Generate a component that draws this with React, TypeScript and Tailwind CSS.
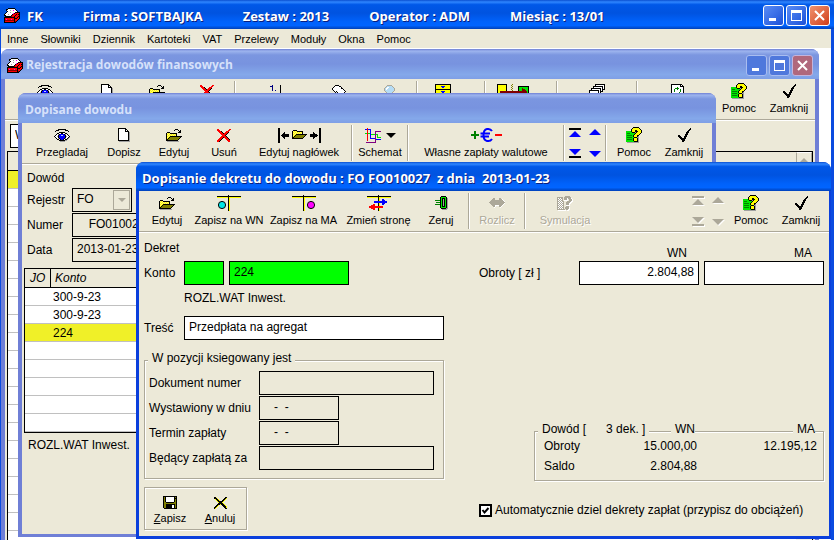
import React from "react";

const PALETTE: Record<string, string> = {
  K: "#000000",
  W: "#ffffff",
  B: "#0000ff",
  R: "#ff0000",
  Y: "#ffff00",
  y: "#fff27a",
  O: "#808000",
  G: "#00e600",
  g: "#a0a0a0",
  D: "#008000",
  M: "#ff00ff",
  C: "#00ffff",
  P: "#800080",
  N: "#800000",
  L: "#b5dcf5",
  S: "#aca899",
};

// Draws a small bitmap, one character per pixel
const Bitmap: React.FC<{ rows: string[] }> = ({ rows }) => {
  const width = Math.max(...rows.map((r) => r.length));
  return (
    <svg width={width} height={rows.length} viewBox={`0 0 ${width} ${rows.length}`} shapeRendering="crispEdges" aria-hidden="true">
      {rows.flatMap((row, y) =>
        row.split("").map((c, x) => (PALETTE[c] ? <rect key={`${x}-${y}`} x={x} y={y} width="1" height="1" fill={PALETTE[c]} /> : null))
      )}
    </svg>
  );
};

const EYE = [
  "....KKKKKKKK....",
  "..KKK......KKK..",
  ".K............K.",
  ".....KKKKKK.....",
  "...KKWWKKWWKK...",
  "..KWgKBBBBKgWK..",
  ".KWWKBBLLBBKWWK.",
  "KWWgKBBBBBBKgWWK",
  ".KWWKBBBBBBKWWKg",
  "..KWgKBBBBKgWKg.",
  "...KKWKBBKWKKg..",
  ".....KKKKKKgg...",
  "......ggggg.....",
];

const PAGE = [
  "KKKKKKKK....",
  "KWWWWWWKK...",
  "KWWWWWWKWK..",
  "KWWWWWWKKKK.",
  "KWWWWWWWWWKg",
  "KWWWWWWWWWKg",
  "KWWWWWWWWWKg",
  "KWWWWWWWWWKg",
  "KWWWWWWWWWKg",
  "KWWWWWWWWWKg",
  "KWWWWWWWWWKg",
  "KWWWWWWWWWKg",
  "KKKKKKKKKKKg",
  ".ggggggggggg",
];

const FOLDER = [
  ".........KKK....",
  "........K...K.K.",
  ".............KK.",
  ".KKK........KKK.",
  "KyYyKKKKKKK.....",
  "KYyYyYyYyYK.....",
  "KyYyYyYyYyK.....",
  "KYyYKKKKKKKKKKKK",
  "KyYKOOOOOOOOOOK.",
  "KYKOOOOOOOOOOK..",
  "KKOOOOOOOOOOK...",
  "KKKKKKKKKKKK....",
  ".gggggggggggg...",
];

const CROSS = [
  "RR..........RR",
  "RRR........RR.",
  ".RRRK....RRR..",
  "..RRRK..RRRK..",
  "...RRRKRRRK...",
  "....RRRRRK....",
  ".....RRRK.....",
  "....RRRRRK....",
  "...RRRKRRRK...",
  "..RRRK..RRRK..",
  ".RRRK....RRRK.",
  "RRRK......RRR.",
  "RRK........RR.",
];

const WIDE_FOLDER = [
  "KK.......................................KK",
  "KK.......................................KK",
  "KK.............KKKK......................KK",
  "KK............KyYyYKKKKKK................KK",
  "KK....K.......KYyYyYyYyYK..........K.....KK",
  "KK...KK.......KyYyYyYyYyK..........KK....KK",
  "KK..KKKKKKK...KYyYKKKKKKKKKKK...KKKKKKK..KK",
  "KK.KKKKKKKK...KyYKOOOOOOOOOK....KKKKKKKK.KK",
  "KK..KKKKKKK...KYKOOOOOOOOOK.....KKKKKKK..KK",
  "KK...KK.......KKOOOOOOOOOK.........KK....KK",
  "KK....K.......KKKKKKKKKKK..........K.....KK",
  "KK.......................................KK",
  "KK.......................................KK",
  "KK.......................................KK",
  "KK.......................................KK",
];

const SCHEME = [
  "..R.............",
  "BBRBBB..........",
  "..R..B..........",
  "..R..B....PPPPPP",
  "..R..B....P.....",
  "GGRGGB....P.....",
  "..R..BGGGGPGG...",
  "..R..B....P.G...",
  "..R..B....P.G...",
  "..R..B....P.GGGG",
  "..R..BBBBBP.....",
  "..R.......PBBBBB",
  "..R.......P.....",
  "..........P.....",
  ".PPPPPPPPPP.....",
];

const HELP = [
  ".......KKKKKK...",
  "......KYYYYYYK..",
  ".....KYYYYYYYYK.",
  ".....KYYYKKYYYYK",
  "GGGGGKYYYKKKYYYK",
  "GGGGGGKKKgKYYYYK",
  "GDDDGGGGGKYYYYK.",
  "GGGGGGGGKYYYYK..",
  "GDDDDDGKYYYKK...",
  "GGGGGGGKYYYKg...",
  "GDDDDDGGKKKgg...",
  "GGGGGGGKYYYKg...",
  "GDDDDDGKYYYKg...",
  "GGGGGGGKYYYKg...",
  "GGGGGGGGKKKKg...",
  ".gggggggggggg...",
];

const HELP_DISABLED = [
  "........SSSSS...",
  "SSSSSS.SSSSSSS..",
  "SWSWSS.SSSWSSSW.",
  "SSWSWS.SSSW.SSSW",
  "SWSWSS.WWWW.SSSW",
  "SSWSWSS...SSSSWW",
  "SWSWSWS..SSSSWW.",
  "SSWSWSS..SSSWW..",
  "SWSWSWS..SSSW...",
  "SSWSWSS..WWWW...",
  "SWSWSWS..SSS....",
  "SSWSWSS.SSSSW...",
  "SWSWSWS.SSSSW...",
  "SSSSSSSS.SSWW...",
  ".WWWWWWWW.WW....",
];

const CHECK = [
  "............K",
  "...........KK",
  "..........KK.",
  ".........KK..",
  "........KKK..",
  "........KK...",
  ".......KKK...",
  "KK.....KK....",
  "KKK...KKK....",
  ".KKK..KK.....",
  "..KKKKKK.....",
  "...KKKK......",
  "....KKK......",
  "....KK.......",
];

const ZERO = [
  "......KKKKK..",
  ".....KGGGGGK.",
  ".....KGKKKGKg",
  ".....KGKgKGKg",
  "DDDDDKGKgKGKg",
  ".....KGKgKGKg",
  ".DDDDKGKgKGKg",
  ".....KGKgKGKg",
  "DDDDDKGKgKGKg",
  ".....KGKgKGKg",
  ".....KGKKKGKg",
  ".....KGGGGGKg",
  "......KKKKKgg",
  ".......ggggg.",
];

const SWAP_DISABLED = [
  "....SS....SS....",
  "...SSS....SSSW..",
  "..SSSSSSSSSSSSW.",
  ".SSSSSSSSSSSSSSW",
  "SSSSSSSSSSSSSSSS",
  ".SSSSSSSSSSSSSSW",
  "..SSSSSSSSSSSSW.",
  "...SSSWWWWSSSW..",
  "....SSW...SSW...",
  ".....W.....W....",
];

const DISK = [
  "KKKKKKKKKKKKKK",
  "KOKWWWWWWWWKOK",
  "KOKWWWWWWWWKKK",
  "KOKWWWWWWWWKOK",
  "KOKWWWWWWWWKOK",
  "KOKWWWWWWWWKOK",
  "KOOKKKKKKKKOOK",
  "KOOOOOOOOOOOOK",
  "KOOKKKKKKKKKOK",
  "KOOKKKKKKWWKOK",
  "KOOKKKKKKWWKOK",
  "KOOKKKKKKWWKOK",
  ".KKKKKKKKKKKKK",
];

const CANCEL = [
  "KKy........KK",
  "KKKy......KKY",
  ".YKKY....KKY.",
  "..YKKY..KKY..",
  "...YKKKKKY...",
  "....YKKKY....",
  "....KKKKKY...",
  "...KKKYKKKY..",
  "..KKY...KKKY.",
  ".KKY.....KKKY",
  "KKY.......KKY",
  "KY.........KK",
];

const LEDGER = [
  "....KKKKKKK.....",
  "..KKWWWWWWWK....",
  "..KWWWgWWMWWK...",
  "...KWWWWWWWWWK..",
  "..KWWWgWWWWKKKKK",
  ".KWWWWWWWMKRRRRK",
  "KWWWgWWWKRRRKRKK",
  "KKWWWWWKRRRKRRRK",
  ".KKKKKKNRRKRRRKK",
  "KKKKKKKKKKKRRKRK",
  "KRRRRRRRRRKKKRRK",
  "KRMRRRRMRRKRRRK.",
  "KNNNNNNNNNKRRK..",
  "KRRRRRRRRRKNK...",
  "KKKKKKKKKKKK....",
];

const HAND = [
  "...KKKK.......",
  "..KWWWWKK.....",
  ".KWWWWWWWK....",
  "KWWWWWWWWKK...",
  "KWWWWWWWWWWK..",
  ".KWWWWWWWWWWK.",
  "..KWKWWWWWWWWK",
  "...K.KWWWWWWK.",
  "......KWWWWK..",
  ".......KWWK...",
  "........KK....",
  "........KK....",
  "........KK....",
];

const LENS = [
  "...SSSSS...",
  "..SLLLLLS..",
  ".SLWWLLLLS.",
  "SLWWLLLLLLS",
  "SLWLLLLLLLS",
  "SLLLLLLLLLS",
  ".SLLLLLLLS.",
  "..SLLLLLS..",
  "...SSSSSKK.",
  "........KKK",
  ".........KK",
  "..........K",
  "..........K",
];

const CABINET = [
  "KKKKKKKKKKKKKKKK",
  "KYYYYYYYYYYYYYYK",
  "KYYYYYBBBBYYYYYK",
  "KYYYYYYBBYYYYYYK",
  "KYYYYYYYYYYYYYYK",
  "KKKKKKKKKKKKKKKK",
  "KYYYYYYYYYYYYYYK",
  "KYYYYYBBBBYYYYYK",
  "KYYYYYYBBYYYYYYK",
  "KYYYYYYYYYYYYYYK",
  "KKKKKKKKKKKKKKKK",
  "KYYYYYYYYYYYYYYK",
  "KYYYYYBBBBYYYYYK",
  "KYYYYYYYYYYYYYYK",
  "KKKKKKKKKKKKKKKK",
];

const TRANSFER = [
  "KKKKKKKKKK.....O................",
  "KYYYYYYYYK....O.................",
  "KYYYYYYYYK.....O.....KKKKKKKKKKK",
  "KYYYYYYYYK....O......KGGGGGGGGGK",
  "KYYYYYYYYK.....O.....KGGGNGGGGGK",
  "KYYYYYYYYK....O......KGGGNNNGGGK",
  "KYYYYYYYYK.....O.....KGGGNNNNGGK",
  "KYYNNNNNNNNNNNNNNNNNNNNNNNNNNNGK",
  "KYYNNNNNNNNNNNNNNNNNNNNNNNNNNNGK",
  "KYYYYYYYYK.....O.....KGGGNNNNGGK",
  "KYYYYYYYYK....O......KGGGNNGGGGK",
  "KYYYYYYYYK.....O.....KGGGGGGGGGK",
  "KYYYYYYYYK....O......KGGGGGGGGGK",
  "KKKKKKKKKK.....O.....KKKKKKKKKKK",
];

const PAGES = [
  "......KKKKKKKKKK",
  "......KWWWWWWWWK",
  "....KKKKKKKKKKWK",
  "....KWWWWWWWWKWK",
  "..KKKKKKKKKKWKWK",
  "..KWWWWWWWWKWKKK",
  "KKKKKKKKKKWKWK..",
  "KWWWWWWWWKWKKK..",
  "KWWWWWWWWKWK....",
  "KWWWWWWWWKKK....",
  "KWWWWWWWWK......",
  "KWWWWWWWWK......",
  "KWWWWWWWWK......",
  "KKKKKKKKKK......",
];

const REFRESH = [
  "KKKKKKKKKKK..",
  "KWWWWWWWWKWK.",
  "KWWWWWWWWKKKK",
  "KWWWWWDWWWWWK",
  "KWWWDDDDWWWWK",
  "KWWDWWDWWDWWK",
  "KWWDWWWWWDWWK",
  "KWWDWWWWWDWWK",
  "KWWWWWWWDWWWK",
  "KWWWWDWDWWWWK",
  "KWWWWWWWWWWWK",
  "KWWWWWWWWWWWK",
  "KWWWWWWWWWWWK",
  "KKKKKKKKKKKKK",
];

const PostIcon: React.FC<{ side: "left" | "right" }> = ({ side }) => (
  <svg width="24" height="16" viewBox="0 0 24 16" shapeRendering="crispEdges" aria-hidden="true">
    <path d="M0 2h24v1H0zM12 1h1v15h-1z" fill="#ffff00" />
    <path d="M0 1h24v1H0zM11 0h1v16h-1z" fill="#000" />
    <circle cx={side === "left" ? 5 : 19} cy="10" r="3.6" fill={side === "left" ? "#00e6e6" : "#ff00ff"} stroke="#000" shapeRendering="auto" />
  </svg>
);

const SideIcon: React.FC = () => (
  <svg width="24" height="16" viewBox="0 0 24 16" shapeRendering="crispEdges" aria-hidden="true">
    <path d="M0 2h24v1H0zM12 1h1v15h-1z" fill="#ffff00" />
    <path d="M0 1h24v1H0zM11 0h1v16h-1z" fill="#000" />
    <path d="M7 6h8V4h2v1h1v1h2v2h-2v1h-1v1h-2V8H7z" fill="#0000ff" />
    <path d="M16 13H8v2H6v-1H4v-1H2v-2h2v-1h2V9h2v2h8z" fill="#ff0000" />
  </svg>
);

const EuroIcon: React.FC = () => (
  <svg width="32" height="16" viewBox="0 0 32 16" aria-hidden="true">
    <path d="M1 8h8M5 4v8" stroke="#008000" strokeWidth="2" />
    <path d="M22 4C20 1 13.500 .5 13.500 8S20 15 22 12M10.500 6.500H20M10.500 9.500H19" stroke="#0000ff" strokeWidth="2" fill="none" />
    <path d="M25 8h7" stroke="#ff0000" strokeWidth="2" />
  </svg>
);

const ListIcon: React.FC = () => (
  <svg width="14" height="16" viewBox="0 0 14 16" shapeRendering="crispEdges" aria-hidden="true">
    <path d="M3 2h1v6H3V4H1V3h2zM6 7h1v1H6z" fill="#000080" />
    <path d="M11 2h1v14h-1z" fill="#000" />
  </svg>
);

interface ToolProps {
  label: string;
  children: React.ReactNode;
  className?: string;
  disabled?: boolean;
  iconOnly?: boolean;
}

const Tool: React.FC<ToolProps> = ({ label, children, className = "w-[50px]", disabled, iconOnly }) => (
  <button
    type="button"
    disabled={disabled}
    aria-label={label}
    className={`flex shrink-0 flex-col items-center whitespace-nowrap pt-1 text-[11px] leading-[14px] ${className} ${
      disabled ? "text-[#aca899] [text-shadow:1px_1px_0_#fff]" : "text-black"
    }`}
  >
    <span className="flex h-[18px] items-center pb-0.5">{children}</span>
    {!iconOnly && <span>{label}</span>}
  </button>
);

const Separator: React.FC = () => <div className="mx-0.5 my-0.5 w-0.5 shrink-0 border-l border-r border-l-[#aca899] border-r-white" />;

const NavArrows: React.FC<{ disabled?: boolean }> = ({ disabled }) => {
  const fill = disabled ? "#aca899" : "#0000ff";
  const bar = disabled ? "#aca899" : "#000000";
  const shadow = disabled ? "[filter:drop-shadow(1px_1px_0_#fff)]" : "";
  const arrows = [
    { name: "Pierwszy", tri: "M6 3l6 6H0z", bar: "M0 0h12v2H0z" },
    { name: "Poprzedni", tri: "M6 1l6 6H0z" },
    { name: "Ostatni", tri: "M0 2h12l-6 6z", bar: "M0 9h12v2H0z" },
    { name: "Następny", tri: "M0 4h12l-6 6z" },
  ];
  return (
    <div className="grid w-9 shrink-0 grid-cols-2 content-between justify-items-center gap-x-1 pb-1 pt-[5px]">
      {arrows.map((a) => (
        <button key={a.name} type="button" disabled={disabled} aria-label={a.name}>
          <svg width="12" height="12" viewBox="0 0 12 12" className={shadow} aria-hidden="true">
            <path d={a.tri} fill={fill} />
            {a.bar && <path d={a.bar} fill={bar} />}
          </svg>
        </button>
      ))}
    </div>
  );
};

const Toolbar: React.FC<{ children: React.ReactNode }> = ({ children }) => (
  <div className="flex h-[41px] shrink-0 border-b border-[#aca899] px-[3px] shadow-[0_1px_0_#fff]">{children}</div>
);

const WindowButtons: React.FC<{ inactive?: boolean }> = ({ inactive }) => {
  const base = "flex size-[21px] items-center justify-center rounded-[3px] border";
  const blue = inactive ? "border-[#a9bdf0] bg-[#4f78dc]" : "border-white bg-linear-to-br from-[#5a8cf5] to-[#1c50d8]";
  const red = inactive ? "border-[#c3b4dc] bg-[#b0687c]" : "border-white bg-linear-to-br from-[#f0926e] to-[#cf3a12]";
  return (
    <div className="ml-auto flex gap-0.5">
      <button type="button" aria-label="Minimalizuj" className={`${base} ${blue}`}>
        <svg width="13" height="13" aria-hidden="true"><path d="M2 9h7v3H2z" fill="#fff" /></svg>
      </button>
      <button type="button" aria-label="Maksymalizuj" className={`${base} ${blue}`}>
        <svg width="13" height="13" aria-hidden="true"><path d="M1 1h11v11H1zM2 4v7h9V4z" fill="#fff" fillRule="evenodd" /></svg>
      </button>
      <button type="button" aria-label="Zamknij okno" className={`${base} ${red}`}>
        <svg width="13" height="13" aria-hidden="true"><path d="M2 2l9 9M11 2l-9 9" stroke="#fff" strokeWidth="2" /></svg>
      </button>
    </div>
  );
};

const ACTIVE_BAR = "bg-[linear-gradient(180deg,#0a4fd0_0%,#2f86ff_7%,#0058e8_16%,#0053e0_45%,#0062fb_75%,#0064ff_88%,#0040b8_100%)] text-white [text-shadow:1px_1px_0_#0a1f80]";
const INACTIVE_BAR = "bg-[linear-gradient(180deg,#6f80d4_0%,#9db4ee_7%,#7b96e0_20%,#7893df_50%,#84a8ea_85%,#7f9fe6_100%)] text-[#d6e1fa]";
const TITLE_FONT = "font-['Trebuchet_MS','Open_Sans',sans-serif] leading-[16px] font-bold whitespace-pre";
const FIELD = "h-6 border border-black px-1 pb-[3px] text-[12px] leading-[16px] text-black outline-none";

const MENU = ["Inne", "Słowniki", "Dziennik", "Kartoteki", "VAT", "Przelewy", "Moduły", "Okna", "Pomoc"];
const STATUS = ["FK", "Firma : SOFTBAJKA", "Zestaw : 2013", "Operator : ADM", "Miesiąc : 13/01"];

const RegisterWindow: React.FC = () => (
  <section className="absolute -bottom-2 left-0 right-3 top-px flex flex-col overflow-hidden rounded-t-lg bg-[#6f7fd6]">
    <header className={`flex h-[30px] shrink-0 items-center gap-[3px] px-[6px] pt-0.5 ${INACTIVE_BAR}`}>
      <Bitmap rows={LEDGER} />
      <h2 className={`text-[12px] ${TITLE_FONT}`}>Rejestracja dowodów finansowych</h2>
      <WindowButtons inactive />
    </header>
    <div className="mx-1 flex flex-1 flex-col overflow-hidden bg-[#ece9d8]">
      <Toolbar>
        <Tool label="Przegladaj" className="w-[74px]" iconOnly><Bitmap rows={EYE} /></Tool>
        <Tool label="Dopisz" iconOnly><Bitmap rows={PAGE} /></Tool>
        <Tool label="Edytuj" iconOnly><Bitmap rows={FOLDER} /></Tool>
        <Tool label="Usuń" iconOnly><Bitmap rows={CROSS} /></Tool>
        <Separator />
        <Tool label="Numeracja" className="w-[76px]" iconOnly><ListIcon /></Tool>
        <Tool label="Wskaż" iconOnly><Bitmap rows={HAND} /></Tool>
        <Tool label="Szukaj" iconOnly><Bitmap rows={LENS} /></Tool>
        <Separator />
        <Tool label="Kartoteka" className="w-[62px] pr-4" iconOnly><Bitmap rows={CABINET} /></Tool>
        <Separator />
        <Tool label="Przenieś" className="w-[66px] pr-4" iconOnly><Bitmap rows={TRANSFER} /></Tool>
        <Separator />
        <Tool label="Kopie" className="w-[74px]" iconOnly><Bitmap rows={PAGES} /></Tool>
        <Separator />
        <div className="ml-auto flex">
          <Tool label="Odśwież" className="w-[74px]" iconOnly><Bitmap rows={REFRESH} /></Tool>
          <Tool label="Pomoc"><Bitmap rows={HELP} /></Tool>
          <Tool label="Zamknij"><Bitmap rows={CHECK} /></Tool>
        </div>
      </Toolbar>
      <div className="flex flex-col gap-[3px] px-0.5 pt-1">
        <input aria-label="Wybór" defaultValue="W" className={`ml-[3px] w-40 bg-white ${FIELD}`} />
        <div className="flex border border-black bg-white">
          <table className="w-full border-separate border-spacing-0">
            <thead>
              <tr><th className="h-[19px] border-b border-black bg-[#ece9d8] p-0" /></tr>
            </thead>
            <tbody>
              {Array.from({ length: 22 }, (_, i) => (
                <tr key={i}>
                  <td className={`h-[18px] border-b border-[#c0c0c0] p-0 ${i === 0 ? "bg-[#f0f028]" : "bg-white"}`} />
                </tr>
              ))}
            </tbody>
          </table>
          <div className="w-4 shrink-0 bg-[#f4f2e8]">
            <button type="button" aria-label="W górę" className="flex h-4 w-4 items-center justify-center border border-l-[#aca899] border-t-white border-r-[#aca899] border-b-[#aca899] bg-[#ece9d8]">
              <svg width="8" height="4" aria-hidden="true"><path d="M4 0l4 4H0z" fill="#aca899" /></svg>
            </button>
          </div>
        </div>
      </div>
    </div>
  </section>
);

const entries = ["300-9-23", "300-9-23", "224", "", "", "", "", ""];

const DocumentWindow: React.FC = () => (
  <section className="absolute bottom-[3px] left-[17px] right-[115px] top-[45px] flex flex-col overflow-hidden rounded-t-lg bg-[#6f7fd6] pb-[3px]">
    <header className={`flex h-[30px] shrink-0 items-center px-[7px] pt-[3px] ${INACTIVE_BAR}`}>
      <h2 className={`text-[12px] ${TITLE_FONT}`}>Dopisane dowodu</h2>
    </header>
    <div className="mx-1 flex-1 overflow-hidden bg-[#ece9d8]">
      <Toolbar>
        <Tool label="Przegladaj" className="w-[74px]"><Bitmap rows={EYE} /></Tool>
        <Tool label="Dopisz"><Bitmap rows={PAGE} /></Tool>
        <Tool label="Edytuj"><Bitmap rows={FOLDER} /></Tool>
        <Tool label="Usuń"><Bitmap rows={CROSS} /></Tool>
        <Tool label="Edytuj nagłówek" className="w-[100px]"><Bitmap rows={WIDE_FOLDER} /></Tool>
        <Separator />
        <Tool label="Schemat">
          <span className="flex items-center gap-[5px]">
            <Bitmap rows={SCHEME} />
            <svg width="10" height="5" aria-hidden="true"><path d="M0 0h10L5 5z" fill="#000" /></svg>
          </span>
        </Tool>
        <Separator />
        <Tool label="Własne zapłaty walutowe" className="w-[150px]"><EuroIcon /></Tool>
        <Separator />
        <NavArrows />
        <Separator />
        <Tool label="Pomoc"><Bitmap rows={HELP} /></Tool>
        <Tool label="Zamknij"><Bitmap rows={CHECK} /></Tool>
      </Toolbar>
      <div className="flex flex-col px-0.5 pt-[6px] text-[12px] leading-[16px]">
        <h3 className="pl-[3px]">Dowód</h3>
        <div className="mt-0.5 flex flex-col gap-px pl-[3px]">
          <div className="flex items-center">
            <label htmlFor="rejestr" className="w-[45px]">Rejestr</label>
            <div className="relative">
              <select id="rejestr" className={`w-[60px] appearance-none bg-[#ece9d8] ${FIELD}`}>
                <option>FO</option>
              </select>
              <span className="pointer-events-none absolute right-0.5 top-0.5 flex h-5 w-[17px] items-center justify-center border border-[#aca899] bg-[#ece9d8]">
                <svg width="8" height="4" aria-hidden="true"><path d="M0 0h8L4 4z" fill="#aca899" /></svg>
              </span>
            </div>
          </div>
          <div className="flex items-center">
            <label htmlFor="numer" className="w-[45px]">Numer</label>
            <input id="numer" defaultValue="FO010027" className={`w-[90px] bg-[#ece9d8] text-center ${FIELD}`} />
          </div>
          <div className="flex items-center">
            <label htmlFor="data" className="w-[45px]">Data</label>
            <input id="data" defaultValue="2013-01-23" className={`w-[80px] bg-[#ece9d8] ${FIELD}`} />
          </div>
        </div>
        <table className="mt-[6px] w-full border-separate border-spacing-0 border border-black">
          <thead>
            <tr className="text-left italic">
              <th className="h-[19px] w-[26px] border-b border-r border-black p-0 pl-[5px] font-normal">JO</th>
              <th className="h-[19px] border-b border-black p-0 pl-1 font-normal">Konto</th>
            </tr>
          </thead>
          <tbody>
            {entries.map((konto, i) => (
              <tr key={i} className={konto === "224" ? "bg-[#f0f028]" : "bg-white"}>
                <td className="h-[18px] border-b border-[#c0c0c0] p-0" />
                <td className="h-[18px] border-b border-[#c0c0c0] p-0 pl-0.5">{konto}</td>
              </tr>
            ))}
          </tbody>
        </table>
        <p className="pl-1 pt-1">ROZL.WAT Inwest.</p>
      </div>
    </div>
  </section>
);

const payment = [
  { id: "dokument", label: "Dokument numer", value: "", width: "w-[175px]" },
  { id: "wystawiony", label: "Wystawiony w dniu", value: "   -  -", width: "w-20" },
  { id: "termin", label: "Termin zapłaty", value: "   -  -", width: "w-20" },
  { id: "zaplata", label: "Będący zapłatą za", value: "", width: "w-[175px]" },
];

const EntryWindow: React.FC = () => (
  <section className="absolute left-[135px] right-0 top-[114px] overflow-hidden rounded-t-lg bg-[#0a3fdc] pb-[3px]">
    <header className={`flex h-[29px] items-center px-[6px] pt-0.5 ${ACTIVE_BAR}`}>
      <h2 className={`text-[13px] ${TITLE_FONT}`}>{"Dopisanie dekretu do dowodu : FO FO010027  z dnia  2013-01-23"}</h2>
    </header>
    <div className="ml-[3px] mr-0.5 bg-[#ece9d8]">
      <Toolbar>
        <Tool label="Edytuj"><Bitmap rows={FOLDER} /></Tool>
        <Tool label="Zapisz na WN" className="w-[74px]"><PostIcon side="left" /></Tool>
        <Tool label="Zapisz na MA" className="w-[75px]"><PostIcon side="right" /></Tool>
        <Tool label="Zmień stronę" className="w-[75px]"><SideIcon /></Tool>
        <Tool label="Zeruj"><Bitmap rows={ZERO} /></Tool>
        <Separator />
        <Tool label="Rozlicz" disabled><Bitmap rows={SWAP_DISABLED} /></Tool>
        <Separator />
        <Tool label="Symulacja" className="w-[74px]" disabled><Bitmap rows={HELP_DISABLED} /></Tool>
        <div className="ml-auto flex">
          <NavArrows disabled />
          <Tool label="Pomoc"><Bitmap rows={HELP} /></Tool>
          <Tool label="Zamknij"><Bitmap rows={CHECK} /></Tool>
        </div>
      </Toolbar>
      <form className="flex justify-between px-[5px] pb-[6px] pt-2 text-[12px] leading-[16px]">
        <div className="w-[300px]">
          <h3>Dekret</h3>
          <div className="mt-[5px] flex items-center">
            <label htmlFor="konto" className="w-10">Konto</label>
            <input aria-label="JO" className={`w-10 bg-[#00ff00] ${FIELD}`} />
            <input id="konto" defaultValue="224" className={`ml-[5px] w-[120px] bg-[#00ff00] ${FIELD}`} />
          </div>
          <p className="mt-[5px] pl-10">ROZL.WAT Inwest.</p>
          <div className="mt-[10px] flex items-center">
            <label htmlFor="tresc" className="w-10">Treść</label>
            <input id="tresc" defaultValue="Przedpłata na agregat" className={`flex-1 bg-white ${FIELD}`} />
          </div>
          <fieldset className="mt-[10px] flex flex-col gap-px border border-[#aca899] px-1 pb-2 shadow-[1px_1px_0_#fff,inset_1px_1px_0_#fff]">
            <legend className="ml-[-1px] bg-[#ece9d8] px-1 pb-[5px]">W pozycji ksiegowany jest</legend>
            {payment.map((f) => (
              <div key={f.id} className="flex items-center">
                <label htmlFor={f.id} className="w-[110px]">{f.label}</label>
                <input id={f.id} defaultValue={f.value} className={`bg-[#ece9d8] ${f.width} ${FIELD}`} />
              </div>
            ))}
          </fieldset>
          <div className="mt-2 flex h-[43px] w-[103px] border border-[#aca899] shadow-[1px_1px_0_#fff,inset_1px_1px_0_#fff]">
            <button type="button" className="flex w-[50px] flex-col items-center pt-[6px] text-[11px] leading-[14px]">
              <span className="flex h-[17px] items-center"><Bitmap rows={DISK} /></span>
              <span><u>Z</u>apisz</span>
            </button>
            <button type="button" className="flex w-[50px] flex-col items-center pt-[6px] text-[11px] leading-[14px]">
              <span className="flex h-[17px] items-center"><Bitmap rows={CANCEL} /></span>
              <span><u>A</u>nuluj</span>
            </button>
          </div>
        </div>

        <div className="flex w-[345px] flex-col pb-3 pt-[5px]">
          <div className="flex justify-end gap-[5px] text-right">
            <label htmlFor="wn" className="w-[120px] pr-3">WN</label>
            <label htmlFor="ma" className="w-[120px] pr-3">MA</label>
          </div>
          <div className="flex items-center gap-[5px]">
            <span className="flex-1">Obroty [ zł ]</span>
            <input id="wn" defaultValue="2.804,88" className={`w-[120px] bg-white text-right ${FIELD}`} />
            <input id="ma" className={`w-[120px] bg-white text-right ${FIELD}`} />
          </div>
          <div className="relative mt-auto ml-[55px] h-[50px] border border-[#aca899] px-[6px] pt-1 shadow-[1px_1px_0_#fff,inset_1px_1px_0_#fff]">
            <span className="absolute -top-[11px] left-[3px] bg-[#ece9d8] px-1 whitespace-pre">{"Dowód [      3 dek. ]"}</span>
            <span className="absolute -top-[11px] right-[128px] bg-[#ece9d8] pl-1">WN</span>
            <span className="absolute -top-[11px] right-2 bg-[#ece9d8] pl-1">MA</span>
            <table className="w-full">
              <tbody>
                <tr className="h-5">
                  <th className="p-0 px-[3px] text-left font-normal">Obroty</th>
                  <td className="p-0 text-right">15.000,00</td>
                  <td className="w-[120px] p-0 text-right">12.195,12</td>
                </tr>
                <tr className="h-5">
                  <th className="p-0 px-[3px] text-left font-normal">Saldo</th>
                  <td className="p-0 text-right">2.804,88</td>
                  <td />
                </tr>
              </tbody>
            </table>
          </div>
          <label className="mt-[21px] flex items-center gap-[3px] whitespace-nowrap">
            <span className="relative flex">
              <input type="checkbox" defaultChecked className="peer size-[13px] appearance-none border-2 border-black bg-white" />
              <svg width="13" height="13" className="pointer-events-none absolute inset-0 hidden peer-checked:block" aria-hidden="true">
                <path d="M3.500 6l2 2.500L9.500 4" fill="none" stroke="#000" strokeWidth="2" />
              </svg>
            </span>
            Automatycznie dziel dekrety zapłat (przypisz do obciążeń)
          </label>
        </div>
      </form>
    </div>
  </section>
);

export default function App() {
  return (
    <div className="flex h-screen min-h-[540px] flex-col overflow-hidden bg-[#0a4be0] font-['Liberation_Sans',Arial,sans-serif] text-black">
      <header className={`flex h-[29px] shrink-0 items-center px-1 pt-0.5 ${ACTIVE_BAR}`}>
        <Bitmap rows={LEDGER} />
        <h1 className={`ml-[7px] flex gap-10 text-[13px] ${TITLE_FONT}`}>
          {STATUS.map((s) => <span key={s}>{s}</span>)}
        </h1>
        <WindowButtons />
      </header>
      <div className="ml-px mr-[3px] flex flex-1 flex-col">
        <nav className="flex h-[19px] items-center gap-3 bg-[#ece9d8] pl-[6px] text-[11px] leading-[14px]">
          {MENU.map((m) => <a key={m} href="#">{m}</a>)}
        </nav>
        <main className="relative flex-1 overflow-hidden bg-white">
          <RegisterWindow />
          <DocumentWindow />
          <EntryWindow />
        </main>
      </div>
    </div>
  );
}
